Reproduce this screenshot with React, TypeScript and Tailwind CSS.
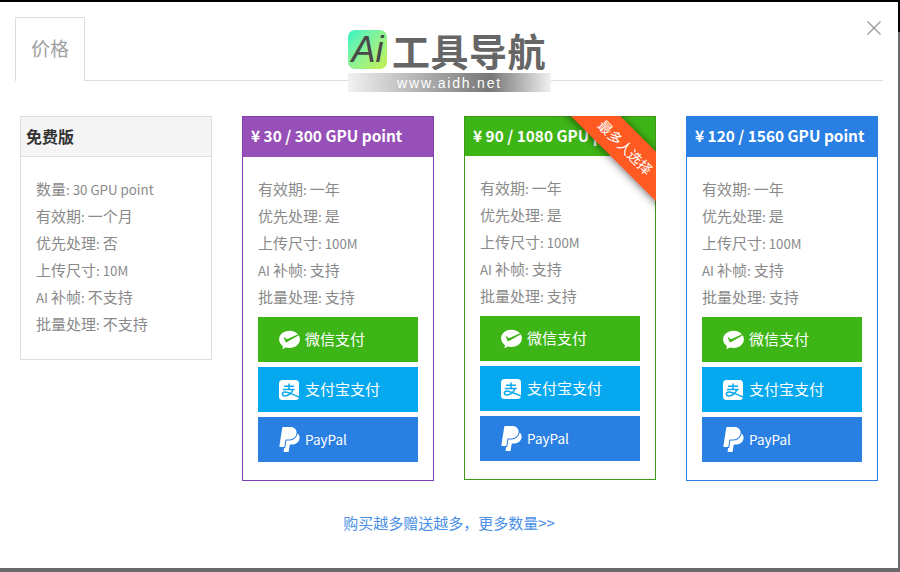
import React from 'react';
import { RiWechatPayFill } from 'react-icons/ri';
import { SiPaypal } from 'react-icons/si';

// Linhas de cada plano
const LINHAS_PAGO = ['有效期: 一年', '优先处理: 是', '上传尺寸: 100M', 'AI 补帧: 支持', '批量处理: 支持'];
const LINHAS_GRATIS = ['数量: 30 GPU point', '有效期: 一个月', '优先处理: 否', '上传尺寸: 10M', 'AI 补帧: 不支持', '批量处理: 不支持'];

// O texto latino da referência é mais estreito que o chinês
const Linha = ({ texto }: { texto: string }) => (
  <li className="h-[27px]">
    {texto.split(/([\x20-\x7e]+)/).map((parte, i) =>
      i % 2 === 1 ? (
        <span key={i} className="text-[13.3px]">
          {parte}
        </span>
      ) : (
        parte
      )
    )}
  </li>
);

const Linhas = ({ linhas }: { linhas: string[] }) => (
  <ul className="text-[15px] leading-[27px] text-[#8a8a8a]">
    {linhas.map((linha) => (
      <Linha key={linha} texto={linha} />
    ))}
  </ul>
);

const IconeAlipay = () => (
  <svg width="20" height="20" viewBox="0 0 20 20" className="ml-px mr-[6px] shrink-0">
    <rect width="20" height="20" rx="3.5" fill="#fff" />
    <path
      d="M5 6.2H15M10 3.4V9.4M3.8 9.4H15.6M14 9.4C12.6 13.6 8.6 16.2 5.4 15.9 2.6 15.6 2.6 12.2 6 12.1 9 12 13.5 14.2 20 17"
      fill="none"
      stroke="#06a9ef"
      strokeWidth="1.5"
    />
  </svg>
);

const BotoesPagamento = () => (
  <div className="mt-[7px] flex flex-col gap-[5px] text-white">
    <div className="flex h-[45px] items-center bg-[#3eb516] pl-5 text-[15px]">
      <RiWechatPayFill className="h-[25px] w-[25px] -ml-[1px] mr-[3px] shrink-0" />
      微信支付
    </div>
    <div className="flex h-[45px] items-center bg-[#06a9ef] pl-5 text-[15px]">
      <IconeAlipay />
      支付宝支付
    </div>
    <div className="flex h-[45px] items-center bg-[#2a7fe3] pl-5 text-[13.5px]">
      <SiPaypal className="h-[25px] w-[25px] -ml-[1px] mr-[3px] shrink-0" />
      PayPal
    </div>
  </div>
);

interface PlanoProps {
  titulo: string;
  corBorda: string;
  corTopo: string;
  alturaTopo: string;
  destaque?: boolean;
}

const Plano = ({ titulo, corBorda, corTopo, alturaTopo, destaque }: PlanoProps) => (
  <div className={`relative border ${corBorda}`}>
    <div className={`flex items-center whitespace-nowrap pb-[2px] pl-2 text-[15.4px] font-bold text-white ${corTopo} ${alturaTopo}`}>
      {titulo}
    </div>
    <div className="px-[15px] pt-[18px] pb-[18px]">
      <Linhas linhas={LINHAS_PAGO} />
      <BotoesPagamento />
    </div>
    {destaque && (
      <div className="absolute -top-px -right-px h-[130px] w-[130px] overflow-hidden">
        <div className="absolute left-[15px] top-[13px] flex h-[35px] w-[170px] rotate-45 items-center justify-center bg-[#ff5a22] text-sm text-white shadow-[0_1px_8px_rgba(0,0,0,0.55)]">
          最多人选择
        </div>
      </div>
    )}
  </div>
);

export default function App() {
  return (
    <div className="relative h-[572px] w-[900px] overflow-hidden bg-[#696969] font-['Noto_Sans_CJK_SC',sans-serif]">
      <div className="absolute inset-x-0 top-0 h-8 bg-black" />
      <div className="relative mt-[2px] h-[566px] w-[898px] bg-white">
        {/* Abas */}
        <div className="mx-[15px] flex h-[79px] border-b border-[#ddd] pt-[15px]">
          <div className="-mb-px flex h-[64px] w-[70px] items-center justify-center border border-b-0 border-[#ddd] bg-white pb-[2px] text-[19px] text-[#a0a0a0]">
            价格
          </div>
        </div>

        {/* Marca sobre as abas */}
        <div className="absolute left-[348px] top-[28px] w-[203px]">
          <div className="flex h-[39px] items-center">
            <div className="flex h-[39px] w-[39px] items-center justify-center rounded-[7px] bg-gradient-to-br from-[#25f3c4] to-[#c4f04a] font-['Liberation_Sans',sans-serif] text-[36px] leading-none italic text-[#4a4a4a]">
              Ai
            </div>
            <span className="ml-[5px] whitespace-nowrap text-[38px] font-bold leading-none tracking-[0.5px] text-[#666]">工具导航</span>
          </div>
          <div className="mt-1 flex h-[19px] items-center justify-center bg-gradient-to-r from-[#f2f2f2] via-[#777] via-70% to-[#f2f2f2] font-['Liberation_Sans',sans-serif] text-sm tracking-[1.8px] text-white">
            www.aidh.net
          </div>
        </div>

        <button className="absolute right-[16px] top-[18px] text-[#999]">
          <svg width="16" height="16" viewBox="0 0 16 16" fill="none" stroke="currentColor" strokeWidth="1.3">
            <path d="M1.5 1.5 14.5 14.5M14.5 1.5 1.5 14.5" />
          </svg>
        </button>

        {/* Planos */}
        <div className="mt-[35px] grid grid-cols-[192px_192px_192px_192px] items-start gap-[30px] pl-5">
          <div className="border border-[#ddd]">
            <div className="flex h-10 items-center border-b border-[#ddd] bg-[#f5f5f5] pb-[2px] pl-[5px] text-base font-bold text-[#333]">
              免费版
            </div>
            <div className="px-[15px] pt-[18px] pb-[22px]">
              <Linhas linhas={LINHAS_GRATIS} />
            </div>
          </div>
          <Plano titulo="¥ 30 / 300 GPU point" corBorda="border-[#7d3fb0]" corTopo="bg-[#9650b8]" alturaTopo="h-10" />
          <Plano titulo="¥ 90 / 1080 GPU point" corBorda="border-[#3f9a16]" corTopo="bg-[#3eb516]" alturaTopo="h-[39px]" destaque />
          <Plano titulo="¥ 120 / 1560 GPU point" corBorda="border-[#2a7fe3]" corTopo="bg-[#2a7fe3]" alturaTopo="h-10" />
        </div>

        <div className="mt-[32px] text-center text-[15px] leading-5 text-[#4a90e6]">
          购买越多赠送越多，更多数量&gt;&gt;
        </div>
      </div>
    </div>
  );
}
